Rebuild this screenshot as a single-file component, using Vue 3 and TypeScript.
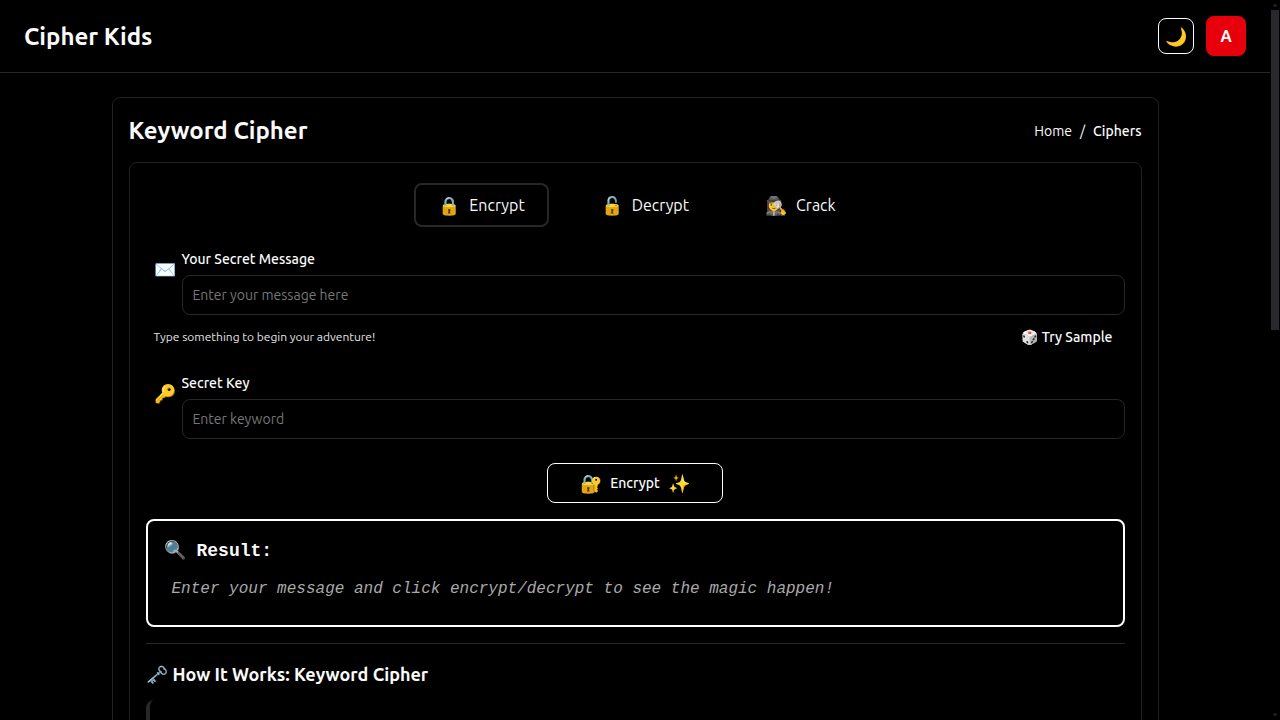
<script setup lang="ts">
import { ref } from 'vue'

type Mode = 'encrypt' | 'decrypt' | 'crack'

const tabs: { id: Mode; icon: string; label: string }[] = [
  { id: 'encrypt', icon: '🔒', label: 'Encrypt' },
  { id: 'decrypt', icon: '🔓', label: 'Decrypt' },
  { id: 'crack', icon: '🕵️‍♀️', label: 'Crack' },
]
const mode = ref<Mode>('encrypt')
const message = ref('')
const keyword = ref('')
</script>

<template>
  <div class="page">
    <header class="topbar">
      <span class="brand">Cipher Kids</span>
      <div class="actions">
        <button class="theme" type="button" aria-label="Toggle theme">🌙</button>
        <button class="avatar" type="button" aria-label="Account">A</button>
      </div>
    </header>

    <main class="card">
      <div class="card-head">
        <h1>Keyword Cipher</h1>
        <nav class="crumbs" aria-label="Breadcrumb">
          <a href="#home">Home</a>
          <span>/</span>
          <a class="current" href="#ciphers">Ciphers</a>
        </nav>
      </div>

      <section class="panel">
        <div class="tabs">
          <button
            v-for="tab in tabs"
            :key="tab.id"
            type="button"
            class="tab"
            :class="{ active: mode === tab.id }"
            @click="mode = tab.id"
          >
            <span class="emoji">{{ tab.icon }}</span>
            <span>{{ tab.label }}</span>
          </button>
        </div>

        <div class="field">
          <span class="emoji">✉️</span>
          <div class="control">
            <label for="message">Your Secret Message</label>
            <input id="message" v-model="message" type="text" placeholder="Enter your message here" />
          </div>
        </div>
        <div class="hint-row">
          <span class="hint">Type something to begin your adventure!</span>
          <button class="sample" type="button"><span>🎲</span><span>Try Sample</span></button>
        </div>

        <div class="field">
          <span class="emoji">🔑</span>
          <div class="control">
            <label for="keyword">Secret Key</label>
            <input id="keyword" v-model="keyword" type="text" placeholder="Enter keyword" />
          </div>
        </div>

        <button class="submit" type="button">
          <span class="emoji">🔐</span><span>Encrypt</span><span class="emoji">✨</span>
        </button>

        <div class="result">
          <h2><span class="emoji">🔍</span><span>Result:</span></h2>
          <p>Enter your message and click encrypt/decrypt to see the magic happen!</p>
        </div>

        <div class="how">
          <h2><span class="emoji">🗝️</span><span>How It Works: Keyword Cipher</span></h2>
          <div class="quote"></div>
        </div>
      </section>
    </main>

    <div class="scrollbar" aria-hidden="true">
      <svg viewBox="0 0 10 10"><path d="M5 3.5 7.5 6.5H2.5Z" /></svg>
      <div class="track"><div class="thumb"></div></div>
      <svg viewBox="0 0 10 10"><path d="M5 6.5 7.5 3.5H2.5Z" /></svg>
    </div>
  </div>
</template>

<style>
html,
body {
  background: #000;
}
</style>

<style scoped>
* {
  box-sizing: border-box;
}
.page {
  height: 100vh;
  overflow: hidden;
  padding-right: 10px;
  background: #000;
  color: #fafafa;
  font-family: Ubuntu, 'Noto Sans', sans-serif;
  font-size: 14px;
  line-height: 20px;
}
button,
input {
  font: inherit;
  color: inherit;
  background: none;
  border: 0;
  margin: 0;
  padding: 0;
}
button {
  cursor: pointer;
  white-space: nowrap;
}
a {
  color: inherit;
  text-decoration: none;
}
h1,
h2,
p {
  margin: 0;
}
.topbar {
  display: flex;
  align-items: center;
  justify-content: space-between;
  height: 73px;
  padding: 0 24px;
  border-bottom: 1px solid #27272a;
}
.brand,
h1 {
  font-size: 24px;
  line-height: 33px;
  font-weight: 600;
}
.actions {
  display: flex;
  align-items: center;
  gap: 12px;
}
.theme {
  width: 36px;
  height: 36px;
  border: 1px solid #fff;
  border-radius: 8px;
  font-size: 18px;
}
.avatar {
  width: 40px;
  height: 40px;
  border-radius: 8px;
  background: #e7000b;
  color: #fff;
  font-size: 16px;
  font-weight: 600;
}
.card {
  max-width: 1047px;
  margin: 24px auto 0;
  padding: 16px;
  border: 1px solid #222225;
  border-radius: 8px;
}
.card-head {
  display: flex;
  align-items: center;
  justify-content: space-between;
  margin-bottom: 15px;
}
.crumbs {
  display: flex;
  gap: 8px;
}
.current {
  font-weight: 500;
}
.panel {
  display: flex;
  flex-direction: column;
  padding: 20px 16px;
  border: 1px solid #222225;
  border-radius: 8px;
}
.emoji {
  font-size: 18px;
}
.tabs {
  display: flex;
  justify-content: center;
  gap: 28px;
  margin-bottom: 22px;
  padding-left: 4px;
}
.tab {
  display: flex;
  align-items: center;
  gap: 9px;
  height: 44px;
  padding: 0 22px;
  border: 2px solid transparent;
  border-radius: 8px;
  font-size: 16px;
}
.tab.active {
  border-color: #27272a;
}
.field {
  display: flex;
  align-items: flex-start;
  gap: 4px;
  padding-left: 8px;
}
.field .emoji {
  width: 24px;
  margin-top: 10px;
}
.control {
  display: flex;
  flex: 1;
  flex-direction: column;
  gap: 6px;
}
.control label {
  font-weight: 500;
}
input {
  width: 100%;
  height: 40px;
  padding: 0 10px;
  border: 1px solid #27272a;
  border-radius: 8px;
}
input::placeholder {
  color: #777;
  opacity: 1;
}
.hint-row {
  display: flex;
  align-items: center;
  justify-content: space-between;
  padding: 12px 12px 26px 8px;
}
.hint {
  font-size: 12px;
  color: #e4e4e7;
}
.sample {
  display: flex;
  gap: 4px;
  font-weight: 500;
}
.submit {
  display: flex;
  align-items: center;
  justify-content: center;
  align-self: center;
  gap: 8px;
  height: 40px;
  margin: 24px 0 16px;
  padding: 0 32px;
  border: 1px solid #fff;
  border-radius: 8px;
  font-weight: 500;
}
.result {
  padding: 16px 16px 26px;
  border: 2px solid #fff;
  border-radius: 8px;
  font-family: 'Liberation Mono', monospace;
}
.result h2,
.how h2 {
  display: flex;
  align-items: center;
  font-size: 18px;
  line-height: 28px;
}
.result h2 {
  gap: 11px;
  font-weight: 700;
}
.result p {
  margin-top: 14px;
  padding-left: 8px;
  font-size: 16px;
  font-style: italic;
  color: #a9a9a9;
}
.how {
  margin-top: 16px;
  padding-top: 16px;
  border-top: 1px solid #27272a;
}
.how h2 {
  gap: 5px;
  font-weight: 600;
}
.quote {
  height: 240px;
  margin-top: 12px;
  border-left: 4px solid #27272a;
  border-radius: 8px;
}
.scrollbar {
  position: fixed;
  top: 0;
  right: 0;
  bottom: 0;
  display: flex;
  flex-direction: column;
  width: 10px;
}
.scrollbar svg {
  width: 10px;
  height: 10px;
  fill: #27272a;
}
.track {
  flex: 1;
  padding: 0 1px;
}
.thumb {
  height: 320px;
  background: #28282d;
}
</style>
